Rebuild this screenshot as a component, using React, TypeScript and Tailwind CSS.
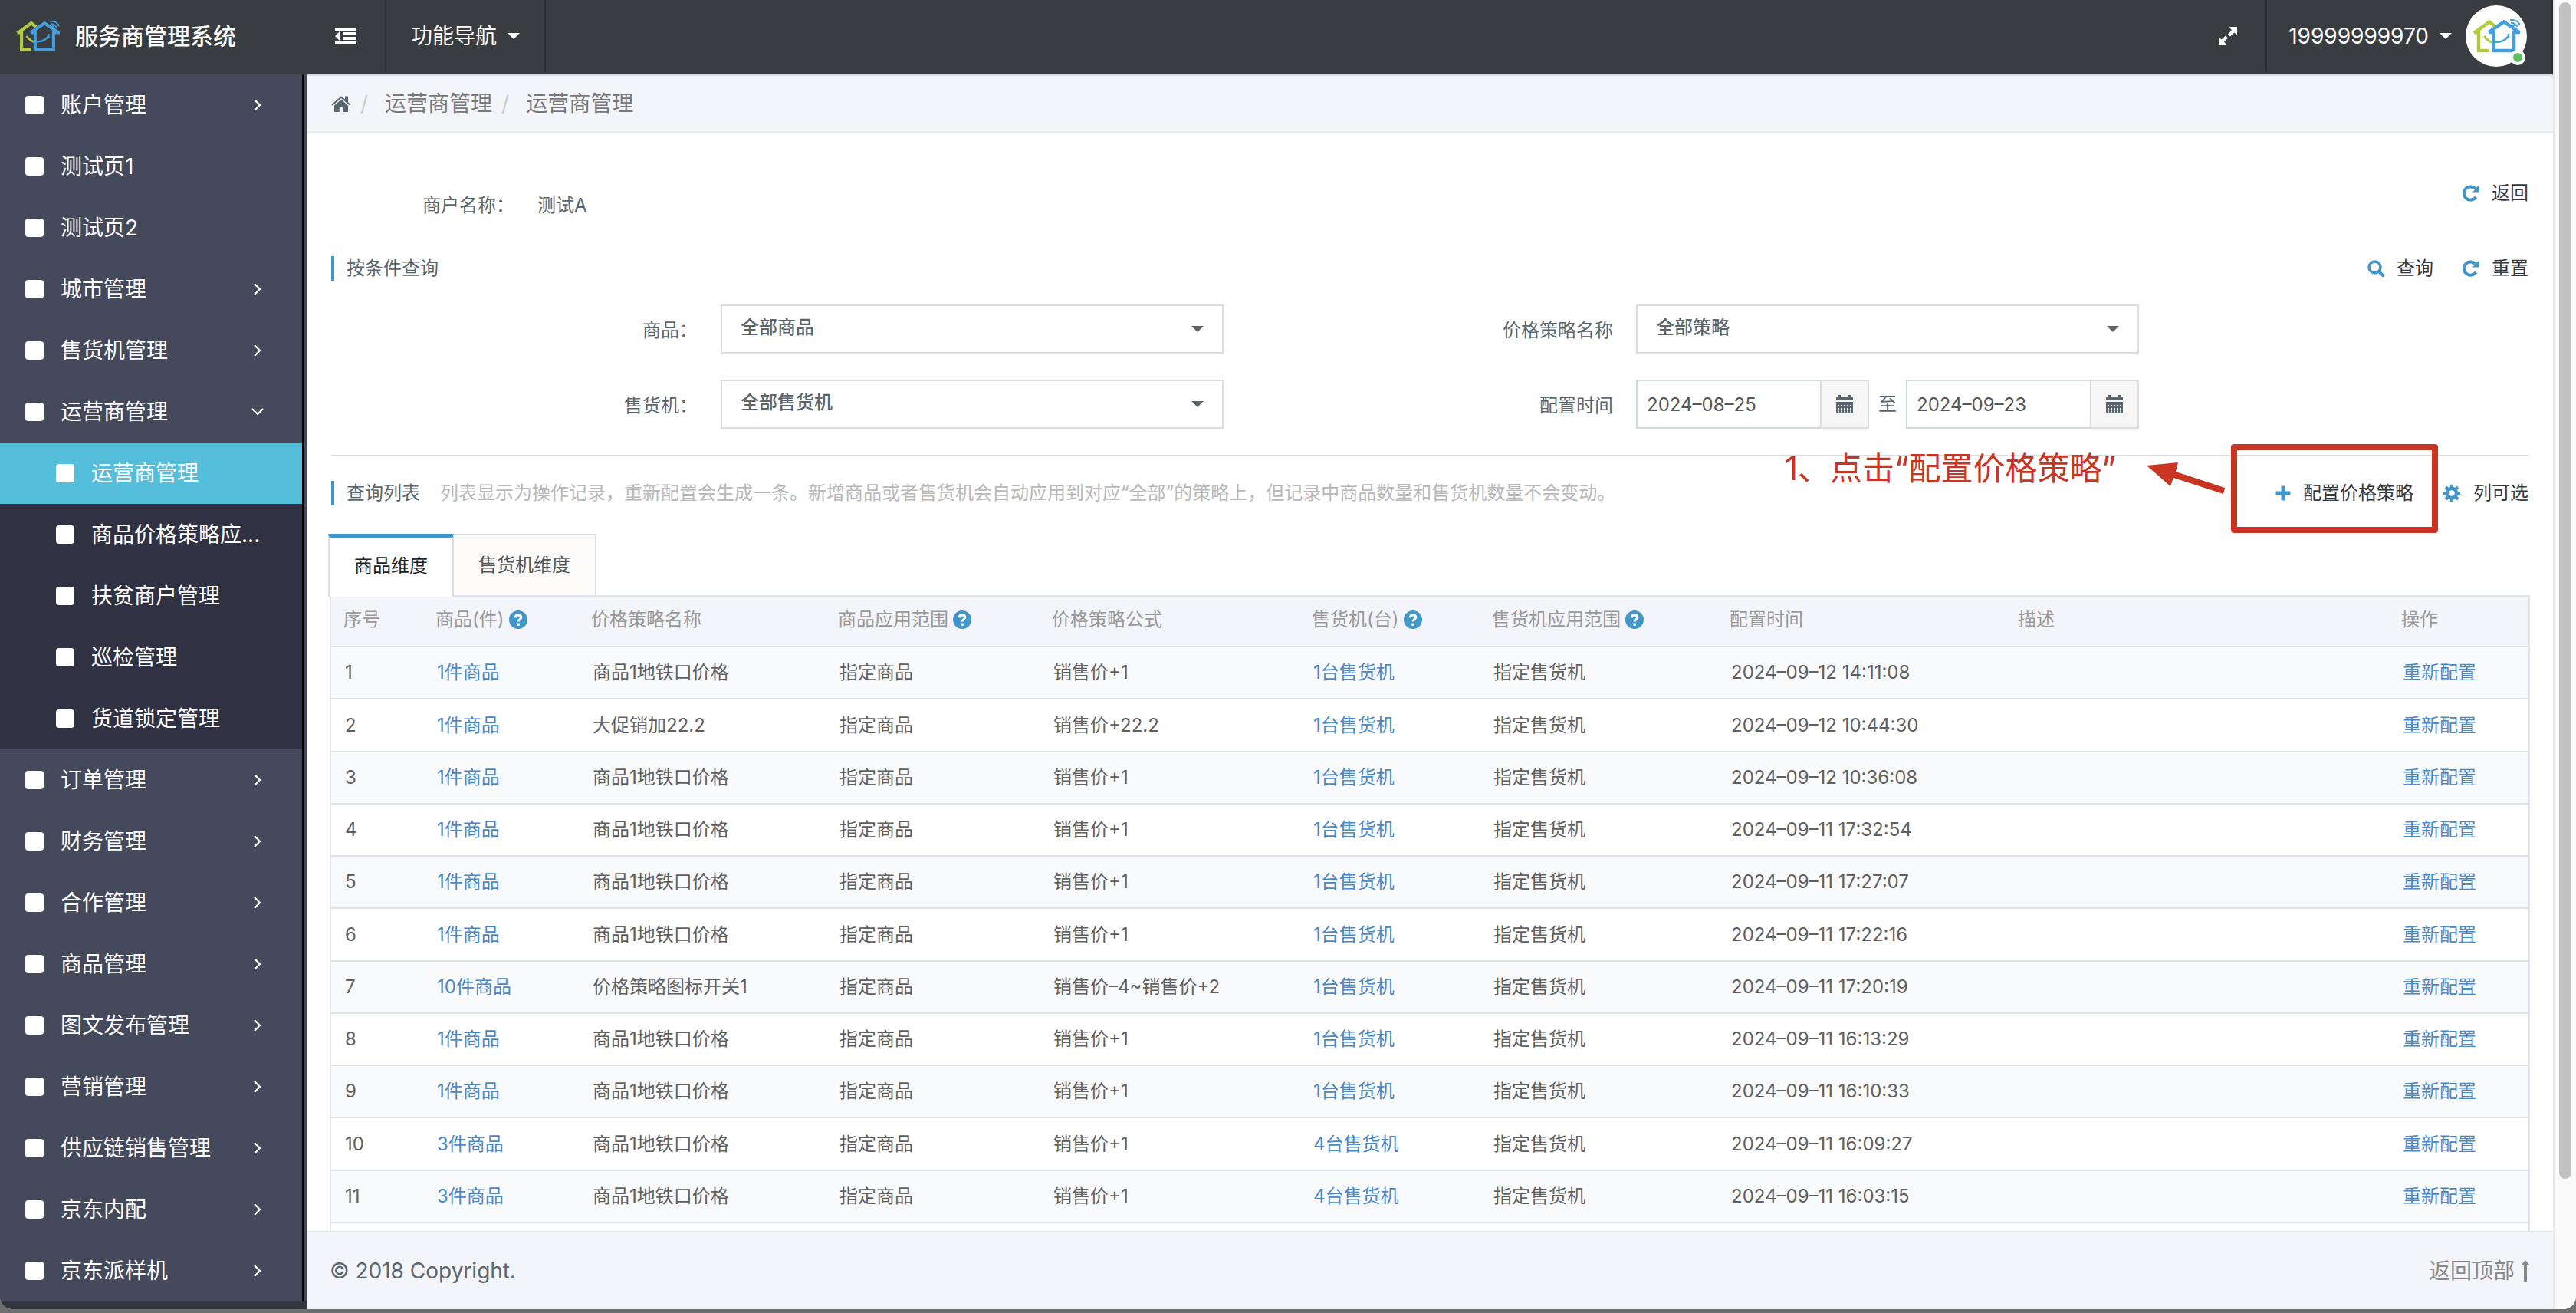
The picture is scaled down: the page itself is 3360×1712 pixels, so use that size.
import type { FC, ReactNode } from "react";

import { clsx } from "clsx";

type IconProps = { className?: string };

type NavItem = {
  label: string;
  expandable?: boolean;
  children?: string[];
};

const NAV_ITEMS: NavItem[] = [
  { label: "账户管理", expandable: true },
  { label: "测试页1" },
  { label: "测试页2" },
  { label: "城市管理", expandable: true },
  { label: "售货机管理", expandable: true },
  {
    label: "运营商管理",
    expandable: true,
    children: ["运营商管理", "商品价格策略应...", "扶贫商户管理", "巡检管理", "货道锁定管理"],
  },
  { label: "订单管理", expandable: true },
  { label: "财务管理", expandable: true },
  { label: "合作管理", expandable: true },
  { label: "商品管理", expandable: true },
  { label: "图文发布管理", expandable: true },
  { label: "营销管理", expandable: true },
  { label: "供应链销售管理", expandable: true },
  { label: "京东内配", expandable: true },
  { label: "京东派样机", expandable: true },
];

const COLUMNS = [
  { title: "序号", width: "w-[120px]" },
  { title: "商品(件)", width: "w-[203px]", help: true },
  { title: "价格策略名称", width: "w-[322px]" },
  { title: "商品应用范围", width: "w-[279px]", help: true },
  { title: "价格策略公式", width: "w-[339px]" },
  { title: "售货机(台)", width: "w-[235px]", help: true },
  { title: "售货机应用范围", width: "w-[310px]", help: true },
  { title: "配置时间", width: "w-[376px]" },
  { title: "描述", width: "w-[500px]" },
  { title: "操作", width: "w-[182px]" },
];

const ROWS = [
  { goods: 1, name: "商品1地铁口价格", formula: "销售价+1", machines: 1, time: "2024–09–12 14:11:08" },
  { goods: 1, name: "大促销加22.2", formula: "销售价+22.2", machines: 1, time: "2024–09–12 10:44:30" },
  { goods: 1, name: "商品1地铁口价格", formula: "销售价+1", machines: 1, time: "2024–09–12 10:36:08" },
  { goods: 1, name: "商品1地铁口价格", formula: "销售价+1", machines: 1, time: "2024–09–11 17:32:54" },
  { goods: 1, name: "商品1地铁口价格", formula: "销售价+1", machines: 1, time: "2024–09–11 17:27:07" },
  { goods: 1, name: "商品1地铁口价格", formula: "销售价+1", machines: 1, time: "2024–09–11 17:22:16" },
  { goods: 10, name: "价格策略图标开关1", formula: "销售价–4~销售价+2", machines: 1, time: "2024–09–11 17:20:19" },
  { goods: 1, name: "商品1地铁口价格", formula: "销售价+1", machines: 1, time: "2024–09–11 16:13:29" },
  { goods: 1, name: "商品1地铁口价格", formula: "销售价+1", machines: 1, time: "2024–09–11 16:10:33" },
  { goods: 3, name: "商品1地铁口价格", formula: "销售价+1", machines: 4, time: "2024–09–11 16:09:27" },
  { goods: 3, name: "商品1地铁口价格", formula: "销售价+1", machines: 4, time: "2024–09–11 16:03:15" },
];

const Logo: FC<IconProps> = ({ className }) => (
  <svg viewBox="0 0 62 44" className={className} fill="none" strokeWidth="4.5">
    <g stroke="#b4cc3c">
      <path d="M29 9 L22 3.5 L2 18 M2 17 H8 V41 H22" />
      <path d="M15 22 Q21 30 29 31" strokeWidth="3" />
    </g>
    <g stroke="#439fe0">
      <path d="M21 17 L41 3.5 L61 17 H54 V41 H27.500 V17 H21" />
      <path d="M28 30 Q40 31 47 22 M47 19 V25" strokeWidth="2.500" />
      <path d="M49 1 Q59 0 62 8 M50 4.500 Q56 5 58.500 10" strokeWidth="1.800" />
    </g>
    <circle cx="53" cy="8.500" r="1.800" fill="#439fe0" />
  </svg>
);

const OutdentIcon: FC<IconProps> = ({ className }) => (
  <svg viewBox="0 0 28 23" className={className} fill="currentColor">
    <path d="M0 0H28V4H0ZM10 6H28V10H10ZM10 12H28V16H10ZM0 18H28V22H0ZM0 11L6 5V17Z" />
  </svg>
);

const ExpandIcon: FC<IconProps> = ({ className }) => (
  <svg viewBox="0 0 24 24" className={className} fill="currentColor">
    <path d="M14 0H24V10L22 9L20.500 7.500L15 12.500L12 9.500L17 4L15.500 2.500ZM10 24H0V14L2 15L3.500 16.500L9 11.500L12 14.500L7 19.500L8.500 21.500Z" />
  </svg>
);

const HomeIcon: FC<IconProps> = ({ className }) => (
  <svg viewBox="0 0 26 22" className={className} fill="currentColor">
    <path d="M13 1.200L18 5.600V1.500H22V9.200L25.600 12.300L24.400 13.700L13 3.900L1.600 13.700L.4 12.300Z" />
    <path d="M13 5.700L22 13.400V21Q22 22 21 22H15.200V15.600H10.800V22H5Q4 22 4 21V13.400Z" />
  </svg>
);

const ReloadIcon: FC<IconProps> = ({ className }) => (
  <svg viewBox="0 0 22 22" className={className}>
    <path d="M17.500 15.800A8.600 8.600 0 1 1 16.500 5" fill="none" stroke="currentColor" strokeWidth="4" />
    <path d="M21.500 1V9.500H13L15.300 7L18.500 2.800Z" fill="currentColor" />
  </svg>
);

const SearchIcon: FC<IconProps> = ({ className }) => (
  <svg viewBox="0 0 22 22" className={className} fill="none" stroke="currentColor">
    <circle cx="9.500" cy="9.500" r="7.500" strokeWidth="3.500" />
    <path d="M15 15L20.300 20.300" strokeWidth="4" strokeLinecap="round" />
  </svg>
);

const PlusIcon: FC<IconProps> = ({ className }) => (
  <svg viewBox="0 0 20 20" className={className} fill="currentColor">
    <path d="M7.500 1Q7.500 .5 8 .5H12Q12.500 .5 12.500 1V7.500H19Q19.500 7.500 19.500 8V12Q19.500 12.500 19 12.500H12.500V19Q12.500 19.500 12 19.500H8Q7.500 19.500 7.500 19V12.500H1Q.5 12.500 .5 12V8Q.5 7.500 1 7.500H7.500Z" />
  </svg>
);

const GearIcon: FC<IconProps> = ({ className }) => (
  <svg viewBox="0 0 24 24" className={className} fill="none" stroke="currentColor">
    <circle cx="12" cy="12" r="6" strokeWidth="4.500" />
    <path
      d="M12 .8V5M12 19V23.200M.8 12H5M19 12H23.200M4.100 4.100L7 7M17 17L19.900 19.900M4.100 19.900L7 17M17 7L19.900 4.100"
      strokeWidth="4.200"
    />
  </svg>
);

const CalendarIcon: FC<IconProps> = ({ className }) => (
  <svg viewBox="0 0 22 24" className={className}>
    <path d="M1 2H3V0H6V2H16V0H19V2H21L22 3V7H0V3ZM0 9H22V23L21 24H1L0 23Z" fill="currentColor" />
    <path d="M2 14H20M2 18H20M2 21.500H20" stroke="#f6f6f6" strokeWidth="2" strokeDasharray="2 2" />
  </svg>
);

const HelpIcon: FC<IconProps> = ({ className }) => (
  <svg viewBox="0 0 24 24" className={className}>
    <circle cx="12" cy="12" r="12" fill="currentColor" />
    <path
      d="M8.300 9.300Q8.600 5.800 12 5.800Q15.700 5.800 15.700 8.900Q15.700 10.600 13.700 11.800Q12.100 12.800 12.100 14.600"
      fill="none"
      stroke="white"
      strokeWidth="3.200"
    />
    <path d="M10.400 16.600H13.800V19.800H10.400Z" fill="white" />
  </svg>
);

const ArrowUpIcon: FC<IconProps> = ({ className }) => (
  <svg viewBox="0 0 12 28" className={className} fill="currentColor">
    <path d="M6 0L12 7H8V28H4V7H0Z" />
  </svg>
);

const Chevron: FC<{ open?: boolean }> = ({ open }) => (
  <svg viewBox="0 0 16 16" className="h-4 w-4" fill="none" stroke="currentColor" strokeWidth="2.200">
    <path d={open ? "M1 4L8 11L15 4" : "M4 1L11 8L4 15"} />
  </svg>
);

const Caret: FC<IconProps> = ({ className }) => (
  <svg viewBox="0 0 16 8" className={clsx("h-2 w-4", className)} fill="currentColor">
    <path d="M0 0H16L8 8Z" />
  </svg>
);

const Header: FC = () => (
  <header className="flex h-[97px] shrink-0 border-r-2 border-[#2a2d31] bg-[#393d41] pb-[3px] text-[28px] text-white">
    <a href="#" className="flex w-[400px] items-center gap-5 pl-5 text-[30px] font-medium">
      <Logo className="h-10 w-[58px]" />
      服务商管理系统
    </a>
    <button type="button" aria-label="收起菜单" className="flex w-[104px] items-center justify-center border-r-2 border-[#2a2d31]">
      <OutdentIcon className="h-[23px] w-7" />
    </button>
    <button type="button" className="flex items-center gap-[14px] border-r-2 border-[#2a2d31] px-8">
      功能导航
      <Caret />
    </button>
    <div className="ml-auto flex">
      <button type="button" aria-label="全屏" className="flex w-[100px] items-center justify-center border-r-2 border-[#2a2d31]">
        <ExpandIcon className="h-6 w-6" />
      </button>
      <button type="button" className="flex items-center gap-[14px] pl-7 pr-8">
        19999999970
        <Caret />
        <span className="relative ml-1 flex h-20 w-20 items-center justify-center rounded-full bg-white">
          <Logo className="h-11 w-[62px]" />
          <span className="absolute bottom-0.5 right-0.5 h-5 w-5 rounded-full border-4 border-white bg-[#5fc05e]" />
        </span>
      </button>
    </div>
  </header>
);

const NavLabel: FC<{ children: ReactNode }> = ({ children }) => (
  <>
    <span className="h-6 w-6 shrink-0 rounded bg-white" />
    <span className="flex-1 whitespace-nowrap">{children}</span>
  </>
);

const Sidebar: FC = () => (
  <nav className="w-[400px] shrink-0 overflow-hidden bg-[#33353f] text-[28px] text-white">
    <div className="bg-[#45495c] pr-1">
      <ul className="border-r-2 border-black">
        {NAV_ITEMS.map((item) => (
          <li key={item.label}>
            <a href="#" className="flex h-20 items-center gap-[22px] pl-[33px] pr-[50px]">
              <NavLabel>{item.label}</NavLabel>
              {item.expandable && <Chevron open={item.children != null} />}
            </a>
            {item.children && (
              <ul className="bg-[#303243]">
                {item.children.map((child, idx) => (
                  <li key={child}>
                    <a
                      href="#"
                      className={clsx("flex h-20 items-center gap-[22px] pl-[73px] pr-8", idx === 0 && "bg-[#55bedb]")}
                    >
                      <NavLabel>{child}</NavLabel>
                    </a>
                  </li>
                ))}
              </ul>
            )}
          </li>
        ))}
      </ul>
    </div>
  </nav>
);

const Breadcrumb: FC = () => (
  <nav className="flex h-[76px] shrink-0 items-center border-b-2 border-t-2 border-b-[#ebeff3] border-t-[#d9dbe1] bg-[#f4f5fa] px-8 text-[28px] text-[#777777]">
    <a href="#" aria-label="首页" className="text-[#5a666d]">
      <HomeIcon className="h-[22px] w-[26px]" />
    </a>
    <span className="px-3 text-[#cccccc]">/</span>
    <a href="#" className="pl-[10px]">
      运营商管理
    </a>
    <span className="px-3 text-[#cccccc]">/</span>
    <a href="#" className="pl-[10px]">
      运营商管理
    </a>
  </nav>
);

const ToolButton: FC<{ icon: ReactNode; children: ReactNode }> = ({ icon, children }) => (
  <button type="button" className="flex h-9 items-center gap-4 text-[#33383d]">
    <span className="text-[#4197c9]">{icon}</span>
    {children}
  </button>
);

const SectionTitle: FC<{ children: ReactNode }> = ({ children }) => (
  <h2 className="flex h-8 items-center border-l-4 border-[#4197c9] pl-4">{children}</h2>
);

const SelectField: FC<{ id: string; label: string; value: string }> = ({ id, label, value }) => (
  <>
    <label htmlFor={id} className="pr-[30px] pt-1 text-right">
      {label}
    </label>
    <div className="relative">
      <select
        id={id}
        className="h-16 w-full appearance-none border-2 border-[#dddddd] bg-white px-6 pb-1 font-medium shadow-[0_1px_1px_rgb(0_0_0_/_0.08)]"
      >
        <option>{value}</option>
      </select>
      <Caret className="pointer-events-none absolute right-[26px] top-7" />
    </div>
  </>
);

const DateInput: FC<{ id: string; label: string; value: string }> = ({ id, label, value }) => (
  <div className="flex min-w-0 flex-1">
    <input
      id={id}
      aria-label={label}
      defaultValue={value}
      className="h-16 w-0 flex-1 border-2 border-r-0 border-[#cfdadd] bg-white px-3 text-[#555555]"
    />
    <button
      type="button"
      aria-label="选择日期"
      className="flex w-16 items-center justify-center border-2 border-[#dddddd] bg-[#f6f6f6] shadow-[0_2px_2px_rgb(0_0_0_/_0.05)]"
    >
      <CalendarIcon className="h-6 w-[22px]" />
    </button>
  </div>
);

const SearchForm: FC = () => (
  <form className="mt-[31px] grid grid-cols-[508fr_656fr_538fr_656fr_508fr] items-center gap-y-[34px]">
    <SelectField id="goods" label="商品：" value="全部商品" />
    <SelectField id="strategy" label="价格策略名称" value="全部策略" />
    <span />
    <SelectField id="machine" label="售货机：" value="全部售货机" />
    <label htmlFor="from" className="pr-[30px] pt-1 text-right">
      配置时间
    </label>
    <div className="flex items-center gap-3">
      <DateInput id="from" label="开始日期" value="2024–08–25" />
      至
      <DateInput id="to" label="结束日期" value="2024–09–23" />
    </div>
  </form>
);

const ListToolbar: FC = () => (
  <div className="mt-8 flex h-8 items-center justify-between">
    <div className="flex items-center gap-[26px]">
      <SectionTitle>查询列表</SectionTitle>
      <p className="text-[#b8b8b8]">
        列表显示为操作记录，重新配置会生成一条。新增商品或者售货机会自动应用到对应“全部”的策略上，但记录中商品数量和售货机数量不会变动。
      </p>
    </div>
    <div className="flex items-center gap-[38px]">
      <div className="relative">
        <ToolButton icon={<PlusIcon className="h-5 w-5" />}>配置价格策略</ToolButton>
        <div className="pointer-events-none absolute -left-[58px] -right-8 -top-[46px] h-[116px] rounded border-8 border-[#c93423]" />
        <div className="pointer-events-none absolute -top-11 right-full mr-[66px] flex gap-10 whitespace-nowrap text-[42px] leading-[60px] text-[#c93423]">
          1、点击“配置价格策略”
          <svg viewBox="0 0 102 42" className="mt-[22px] h-[42px] w-[102px]" fill="currentColor">
            <path d="M0 4L41 0L38 12L102 33L100 41L35 20L31 31Z" />
          </svg>
        </div>
      </div>
      <ToolButton icon={<GearIcon className="h-6 w-6" />}>列可选</ToolButton>
    </div>
  </div>
);

const Tabs: FC = () => (
  <div role="tablist" className="relative -ml-1 mt-[37px] flex h-[82px]">
    <button
      type="button"
      role="tab"
      aria-selected="true"
      className="flex items-center border-x-2 border-t-[6px] border-x-[#dddddd] border-t-[#4197c9] bg-white px-8 pb-1 text-[#222222]"
    >
      商品维度
    </button>
    <button
      type="button"
      role="tab"
      aria-selected="false"
      className="mb-0.5 flex items-center border-r-2 border-t-2 border-[#dddddd] bg-[#fcfbf9] px-8 text-[#555555]"
    >
      售货机维度
    </button>
  </div>
);

const StrategyTable: FC = () => (
  <div className="-mx-0.5 -mt-0.5 flex-1 border-x-2 border-t-2 border-[#e0e3e8]">
    <table className="w-full table-fixed border-separate border-spacing-0 text-left text-[#606060]">
      <thead>
        <tr className="h-[66px] bg-[#f4f5fa] text-[#999999]">
          {COLUMNS.map((column) => (
            <th key={column.title} className={clsx("border-b-2 border-[#e0e3e8] px-4 pb-1 font-normal", column.width)}>
              <span className="flex items-center gap-1.5 whitespace-nowrap">
                {column.title}
                {column.help && <HelpIcon className="h-6 w-6 text-[#4197c9]" />}
              </span>
            </th>
          ))}
        </tr>
      </thead>
      <tbody className="[&_td]:border-b-2 [&_td]:border-[#e0e3e8] [&_td]:px-[18px] [&_td]:whitespace-nowrap">
        {ROWS.map((row, idx) => (
          <tr key={row.time} className="h-[68px] odd:bg-[#f9fafc] [&:nth-child(4n+2)]:h-[69px]">
            <td>{idx + 1}</td>
            <td>
              <a href="#" className="text-[#4a88c8]">
                {row.goods}件商品
              </a>
            </td>
            <td>{row.name}</td>
            <td>指定商品</td>
            <td>{row.formula}</td>
            <td>
              <a href="#" className="text-[#4a88c8]">
                {row.machines}台售货机
              </a>
            </td>
            <td>指定售货机</td>
            <td>{row.time}</td>
            <td />
            <td>
              <a href="#" className="text-[#4a88c8]">
                重新配置
              </a>
            </td>
          </tr>
        ))}
      </tbody>
    </table>
  </div>
);

const Footer: FC = () => (
  <footer className="flex h-[102px] shrink-0 items-center justify-between border-t-2 border-[#dde4e9] bg-[#f4f5fa] px-[30px] text-[28px] text-[#5a666d]">
    <span>© 2018 Copyright.</span>
    <a href="#" className="flex items-center gap-2 text-[#888888]">
      返回顶部
      <ArrowUpIcon className="h-7 w-3" />
    </a>
  </footer>
);

export default function App() {
  return (
    <div className="flex h-screen flex-col bg-[#6e6f6f] font-['Inter','Noto_Sans_CJK_SC',sans-serif]">
      <div className="flex min-h-0 flex-1 overflow-hidden rounded-b-2xl bg-[#fafafa]">
        <div className="flex min-w-0 flex-1 flex-col">
          <Header />
          <div className="flex min-h-0 flex-1">
            <Sidebar />
            <div className="flex min-w-0 flex-1 flex-col bg-white">
              <Breadcrumb />
              <main className="flex min-h-0 flex-1 flex-col overflow-hidden px-8 pt-[61px] text-[24px] leading-9 text-[#5a666d]">
                <div className="flex items-start justify-between">
                  <dl className="mt-4 flex gap-[30px] pl-[119px]">
                    <dt>商户名称：</dt>
                    <dd>测试A</dd>
                  </dl>
                  <ToolButton icon={<ReloadIcon className="h-[22px] w-[22px]" />}>返回</ToolButton>
                </div>
                <div className="mt-12 flex h-8 items-center justify-between">
                  <SectionTitle>按条件查询</SectionTitle>
                  <div className="flex gap-[38px]">
                    <ToolButton icon={<SearchIcon className="h-[22px] w-[22px]" />}>查询</ToolButton>
                    <ToolButton icon={<ReloadIcon className="h-[22px] w-[22px]" />}>重置</ToolButton>
                  </div>
                </div>
                <SearchForm />
                <hr className="mt-[34px] border-t-2 border-[#dddddd]" />
                <ListToolbar />
                <Tabs />
                <StrategyTable />
              </main>
              <Footer />
            </div>
          </div>
        </div>
        <div className="w-[30px] shrink-0 border-l-2 border-[#e8e8e8] pl-[6px] pt-[3px]">
          <div className="h-[90%] w-4 rounded-full bg-[#c1c1c1]" />
        </div>
      </div>
      <div className="h-[5px] shrink-0" />
    </div>
  );
}
